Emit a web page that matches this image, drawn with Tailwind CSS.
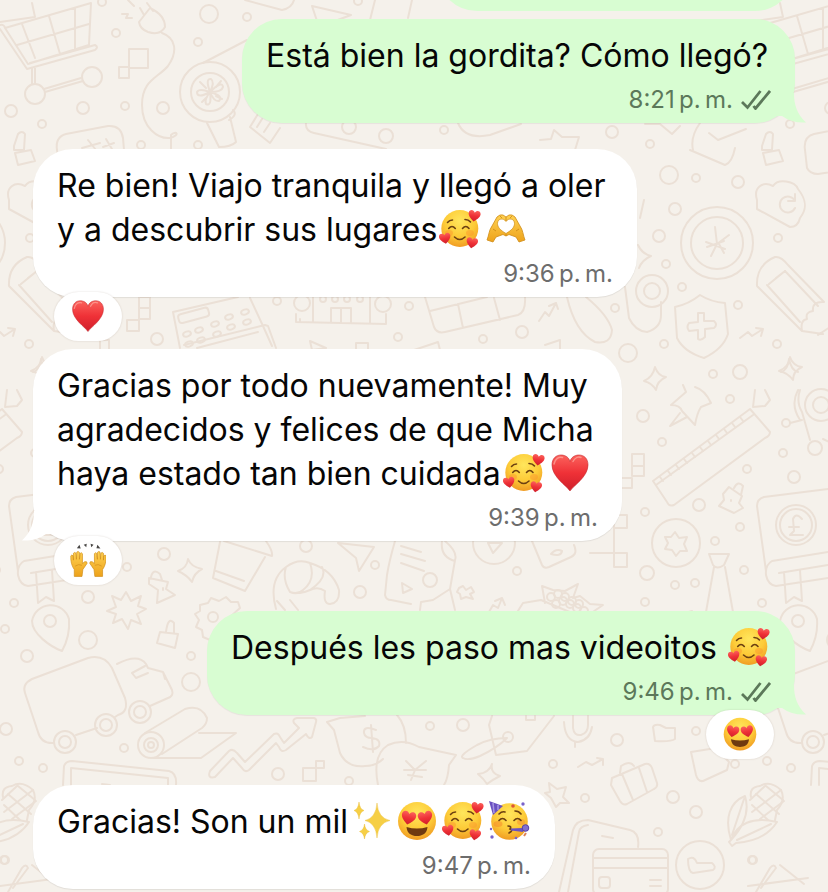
<!DOCTYPE html>
<html lang="es">
<head>
    <!-- Page setup -->
    <meta charset="UTF-8">
    <meta name="viewport" content="width=device-width, initial-scale=1.0">
    <title>Chat</title>
    <!-- Styling library -->
    <script src="https://cdn.jsdelivr.net/npm/@tailwindcss/browser@4"></script>
</head>
<body class="bg-[#f5f1eb] font-['Inter',sans-serif] text-[#060606]">
    <!-- Shared emoji and icon shapes -->
    <svg class="absolute size-0" aria-hidden="true">
        <defs>
            <radialGradient id="skin" cx=".5" cy=".3" r=".75">
                <stop offset="0" stop-color="#ffe65c"/>
                <stop offset=".55" stop-color="#fdcb38"/>
                <stop offset="1" stop-color="#ee9420"/>
            </radialGradient>
            <linearGradient id="red" x2="0" y2="1">
                <stop offset="0" stop-color="#fb625c"/>
                <stop offset=".5" stop-color="#ef3137"/>
                <stop offset="1" stop-color="#cf1f2b"/>
            </linearGradient>
            <linearGradient id="hand" x2="0" y2="1">
                <stop offset="0" stop-color="#ffd252"/>
                <stop offset="1" stop-color="#eda21b"/>
            </linearGradient>
            <path id="mini-heart" d="M0 5.5C-4.5 2.2-6 0-6-2.3C-6-6-1.6-6.8 0-3.4C1.6-6.8 6-6 6-2.3C6 0 4.5 2.2 0 5.5Z" fill="url(#red)"/>
            <symbol id="love-face" viewBox="0 0 42 42">
                <circle cx="20.8" cy="19.5" r="18.5" fill="url(#skin)"/>
                <ellipse cx="10" cy="24" rx="4" ry="3" fill="#f98b2b" opacity=".4"/>
                <ellipse cx="31" cy="24" rx="4" ry="3" fill="#f98b2b" opacity=".4"/>
                <g fill="none" stroke="#6b4011" stroke-width="1.6" stroke-linecap="round">
                    <path d="M8.5 13.5Q10.5 11 13.5 11M26 10.5Q29.500 10.500 31.500 13"/>
                    <path d="M9.7 19.5Q13 15.5 16.3 19.5M23.500 19.500Q26.800 15.500 30 19.500"/>
                    <path d="M15.5 28Q20.7 33 26 28"/>
                </g>
                <use href="#mini-heart" transform="translate(35.3 7) rotate(8)"/>
                <use href="#mini-heart" transform="translate(6 29.5) rotate(-10) scale(.95)"/>
                <use href="#mini-heart" transform="translate(33 34) rotate(10) scale(.95)"/>
            </symbol>
            <symbol id="heart-eyes" viewBox="0 0 42 42">
                <circle cx="21" cy="20" r="19" fill="url(#skin)"/>
                <use href="#mini-heart" transform="translate(12.5 17) rotate(12) scale(1.2)"/>
                <use href="#mini-heart" transform="translate(29.5 17) rotate(-12) scale(1.2)"/>
                <path d="M10.5 26Q21 29 31.5 26C31 32.5 26.5 35 21 35S11 32.5 10.5 26Z" fill="#6f3a10"/>
            </symbol>
            <symbol id="heart" viewBox="0 0 42 42">
                <path d="M21 38C18 33 3 24 3 12C3 5.500 7 2 12 2C16.500 2 20 4.500 21 8.500C22 4.500 25.500 2 30 2C35 2 39 5.500 39 12C39 24 24 33 21 38Z" fill="url(#red)" stroke="#c4282d" stroke-width=".6"/>
                <path d="M5 11C6 5.500 10 3.500 13.500 4.500M24 8.500C26 4.500 29.500 3.500 32 4.500" fill="none" stroke="#ffaaa0" stroke-width="1.5" stroke-linecap="round" opacity=".7"/>
            </symbol>
            <symbol id="heart-hands" viewBox="0 0 42 42">
                <path d="M2 31C4 26 4 21 7 17L12 8Q15 5 18 6L21 8L24 6Q27 5 30 8L35 17C38 21 38 26 40 31L34 33L31 28L24 25.500L21 27L18 25.500L11 28L8 33Z" fill="url(#hand)" stroke="#cf8c17" stroke-width=".8" stroke-linejoin="round"/>
                <path d="M21 24.5C15 21 12.5 18 12.5 14.5C12.5 9.500 18.500 8.500 21 12.500C23.500 8.500 29.500 9.500 29.500 14.500C29.500 18 27 21 21 24.500Z" fill="#fff" stroke="#cf8c17" stroke-width=".7"/>
                <path d="M21 8V12M21 25V27M8 20L11 22M34 20L31 22M15 7L17 9M27 7L25 9" fill="none" stroke="#c98512" stroke-width=".8"/>
            </symbol>
            <symbol id="raised-hands" viewBox="0 0 42 42">
                <g id="one-hand">
                    <path d="M5 39V31C2 27 .5 21 1 15Q2 13 3.5 15L4 20L4 12Q5.5 10 7 12L7.500 19L8 10.500Q9.500 9 11 11V19L12 12Q13.500 10.500 14.500 12.500L14.500 24L17 22Q20 21 20 23.500L15 31L14 39Z" fill="url(#hand)" stroke="#d08e1b" stroke-width=".8" stroke-linejoin="round"/>
                    <path d="M6 27Q10 24 14 26" fill="none" stroke="#d08e1b" stroke-width=".8"/>
                </g>
                <use href="#one-hand" transform="translate(43 0) scale(-1 1)"/>
                <path d="M8 6L11 2L12.5 6.5ZM16 2L19.5 .8L19 5ZM24 .8L27.5 2L24.8 5ZM32 2L35.5 6.5L30.8 6Z" fill="#484644"/>
            </symbol>
            <symbol id="sparkles" viewBox="0 0 42 42">
                <g fill="#f6cf45" stroke="#e9b92e" stroke-width=".4">
                    <path d="M27 2Q28 17 40 19.5Q28 22 27 37Q26 22 15 19.5Q26 17 27 2Z"/>
                    <path d="M9 1Q9.7 8 14 9.5Q9.7 11 9 18Q8.3 11 4 9.5Q8.3 8 9 1Z"/>
                    <path d="M14.5 23Q15.2 29 19.500 30.500Q15.200 32 14.500 38Q13.800 32 9.500 30.500Q13.800 29 14.500 23Z"/>
                </g>
            </symbol>
            <symbol id="party" viewBox="0 0 42 42">
                <circle cx="21.5" cy="20.5" r="18.3" fill="url(#skin)"/>
                <ellipse cx="10" cy="23" rx="4.5" ry="3" fill="#f57c2b" opacity=".45"/>
                <ellipse cx="33" cy="21" rx="4" ry="3" fill="#f57c2b" opacity=".4"/>
                <path d="M1 0L15 5L5 14Z" fill="#6a51c0"/>
                <path d="M5 2L6 12M10 4L10 9" stroke="#a797e4" stroke-width="1.5"/>
                <g fill="none" stroke="#6b4011" stroke-width="1.6" stroke-linecap="round">
                    <path d="M11 13Q14 10 17 11M27 10Q31 10 33 13"/>
                    <path d="M11 19.5Q14.5 15.5 18 19.5M26 19.5Q29.5 15.5 33 19.5"/>
                    <path d="M20 25Q24 25 22 28Q26 29 21 32"/>
                </g>
                <path d="M23 27.5L35 27V31L23 29.5Z" fill="#6a51c0"/>
                <circle cx="37.5" cy="27" r="3.3" fill="#8270ce" stroke="#573fa8"/>
                <g fill="#7962ca">
                    <circle cx="35" cy="3" r="1.7"/><circle cx="4" cy="36" r="1.7"/><circle cx="3" cy="28" r="1.2"/><circle cx="28" cy="37" r="1.3"/>
                </g>
                <circle cx="25" cy="5" r="1.8" fill="#dd5537"/>
                <path d="M36 35L38 32" stroke="#dd8055" stroke-width="2"/>
            </symbol>
            <symbol id="ticks" viewBox="0 0 30 20">
                <path d="M1 12L6.5 17.5L19.5 1M12.5 16L14.5 18.5L29 1" fill="none" stroke="currentColor" stroke-width="2.8"/>
            </symbol>
            <symbol id="tail" viewBox="0 0 30 30">
                <path d="M0 0H17C17 12 20 21 29 29.5C20 30 12 28 5 23L0 23Z" fill="currentColor"/>
            </symbol>
        </defs>
    </svg>

    <main class="relative isolate min-h-screen overflow-hidden px-[33px] pb-[3px]">
        <!-- Wallpaper doodles, one tile repeated sideways -->
        <svg class="absolute inset-0 -z-10 size-full" viewBox="0 0 828 892" preserveAspectRatio="xMinYMin slice" fill="none" stroke="#ebe0d6" stroke-width="2" stroke-linejoin="round" stroke-linecap="round" aria-hidden="true">
            <g id="tile">
                <!-- shopping cart -->
                <path d="M5 28L91 3L89 45L28 64ZM22 24L35 58M49 16L60 54M75 8V49M17 45L89 24M0 25Q4 24 5 28M0 29L27 69L95 50Q99 47 95 45L30 63M32 68V84M35 68V84M44 89L81 78M45 92L83 81M0 22L35 17L32 3"/>
                <circle cx="35" cy="94" r="10"/><circle cx="92" cy="77" r="10"/>
                <!-- squares, plug and cable -->
                <path d="M129 49H148V68H129ZM119 67H129V78H119ZM139 22L150 8Q165 15 165 27Q160 36 148 32Q140 29 139 22ZM144 15L140 8M153 11L147 3M122 14H128L126 18H132M128 0L134 6M162 33C176 38 178 52 168 66C158 78 142 80 142 105C142 128 158 139 170 138C181 135 176 130 171 135V149"/>
                <!-- desk fan -->
                <circle cx="210" cy="92" r="30"/><circle cx="210" cy="92" r="19"/>
                <path d="M210 92Q205 78 211 79Q215 82 210 92Q222 80 223 87Q222 92 210 92Q224 96 219 101Q214 102 210 92Q212 107 206 104Q204 100 210 92Q197 99 197 92Q199 88 210 92M200 82L206 88M221 81L216 87M222 99L216 96M202 102L207 97M203 63L247 40M207 123L219 147Q231 147 236 142L230 117M229 120Q238 115 233 110"/>
                <path d="M57 150Q55 137 66 134L108 126Q121 125 123 138L124 150M82 148L100 143M88 140L96 150M106 139L112 149M103 147L114 143"/>
                <path d="M258 114L250 127L270 143L280 128M262 119L257 127M270 123L264 132M306 123Q305 131 314 133L386 149M245 0L282 10Q292 8 294 0M312 6L351 15L319 27ZM375 0L370 20M412 0L408 18"/>
                <path d="M458 123Q465 140 490 135L521 124M540 140L551 139L554 130L562 137L579 137L575 150M645 124H660L672 134L680 126M700 123Q690 137 693 150M709 133L718 140L746 129M18 134Q22 130 25 134L24 150H14V146Z"/>
                <circle cx="11" cy="111" r="6"/><circle cx="83" cy="108" r="6"/><circle cx="125" cy="106" r="4"/><circle cx="102" cy="2" r="4"/><circle cx="116" cy="33" r="4"/><circle cx="209" cy="14" r="9"/><circle cx="247" cy="17" r="4"/><circle cx="198" cy="42" r="4"/><circle cx="163" cy="108" r="6"/><circle cx="42" cy="124" r="4"/><circle cx="141" cy="145" r="4"/><circle cx="198" cy="145" r="4"/><circle cx="349" cy="127" r="7"/><circle cx="386" cy="136" r="7"/><circle cx="444" cy="130" r="4"/><circle cx="612" cy="132" r="6"/><circle cx="650" cy="144" r="4"/><circle cx="358" cy="1" r="4"/>
                <!-- lock, calculator and cloud -->
                <path d="M15 153L31 150L35 161L18 165ZM57 150L59 168Q62 174 70 174L110 168L125 150M690 150L725 165Q732 163 735 148M9 200C5 187 15 181 25 186C30 178 47 181 50 189C58 199 60 208 52 218Q50 227 42 227L9 209ZM47 201A8 8 0 1 0 47 208M47 194V201H40"/>
                <!-- coin -->
                <circle cx="717" cy="243" r="36"/><circle cx="717" cy="243" r="26"/>
                <path d="M715 227L717 244L729 235M717 244L711 256M706 242L725 249M707 247L724 241M719 244L724 253"/>
                <!-- key ring -->
                <circle cx="652" cy="291" r="16"/><circle cx="652" cy="291" r="8"/>
                <path d="M625 287L629 318Q635 331 647 332Q661 328 661 315V302M644 200L640 218M638 245Q642 254 651 256Q642 260 639 268"/>
                <!-- shield -->
                <path d="M700 295Q711 302 725 303L728 334Q723 349 704 358Q684 352 677 338L675 307Q689 304 700 295ZM698 313H704V321L714 321Q718 325 714 328L705 329V337Q701 341 698 339V330L689 331Q686 327 689 323L698 322Z"/>
                <!-- pencil -->
                <path d="M9 286Q8 265 27 257Q33 256 40 265L76 302M9 286L54 331L75 334M21 284L37 271M37 271L70 306M19 285L52 322M37 271L28 278M76 302Q64 301 65 311Q57 312 59 319Q52 320 54 331M70 335L85 325M-8 338L0 332L4 336L15 329M15 329L8 328M15 329L13 336"/>
                <!-- calendar, trend arrow, bat -->
                <path d="M425 297L434 327Q437 334 445 332L518 315Q526 312 525 297M430 311L487 297M458 304L463 328M494 298L500 320M539 321L545 312L549 316L556 303M556 303L549 306M556 303L558 309M567 297Q575 332 595 342Q611 345 612 330Q608 315 586 297M414 350L438 342L440 350M545 345L560 340V350"/>
                <!-- receipt machine -->
                <path d="M173 312L238 297M173 312L180 348M250 298L263 326L272 346M184 345L265 325L268 326L276 348M197 348L258 332"/>
                <rect x="178" y="311" width="31" height="9" rx="3" transform="rotate(-15 193 315)"/>
                <g id="keys"><ellipse cx="187" cy="334" rx="4" ry="2.5" transform="rotate(-20 187 334)"/><ellipse cx="199" cy="330" rx="4" ry="2.5" transform="rotate(-20 199 330)"/><ellipse cx="215" cy="324" rx="4" ry="2.5" transform="rotate(-20 215 324)"/><ellipse cx="229" cy="317" rx="4" ry="2.5" transform="rotate(-20 229 317)"/><ellipse cx="245" cy="312" rx="4" ry="2.5" transform="rotate(-20 245 312)"/></g>
                <use href="#keys" transform="translate(2 10)"/>
                <path d="M139 297H150V319H139ZM139 308H150M127 320H139V331H127ZM93 340H109V349M100 340V349"/>
                <!-- building -->
                <path d="M296 322L386 324V314M296 322V314M313 297V322M370 297V323M331 322V308H351V322M341 308V322M300 319V322"/>
                <circle cx="302" cy="303" r="8"/><circle cx="383" cy="304" r="8"/><circle cx="323" cy="299" r="3"/><circle cx="335" cy="299" r="3"/><circle cx="347" cy="299" r="3"/><circle cx="360" cy="299" r="3"/>
                <path d="M310 341L326 348L312 350ZM356 349V343H368V349M33 372Q40 370 41 359Q43 370 50 372"/>
                <circle cx="669" cy="175" r="9"/><circle cx="696" cy="178" r="4"/><circle cx="738" cy="182" r="6"/><circle cx="675" cy="209" r="6"/><circle cx="659" cy="236" r="6"/><circle cx="666" cy="264" r="4"/><circle cx="682" cy="287" r="4"/><circle cx="30" cy="238" r="4"/><circle cx="738" cy="305" r="4"/><circle cx="615" cy="308" r="4"/><circle cx="664" cy="344" r="4"/><circle cx="628" cy="353" r="9"/><circle cx="29" cy="344" r="4"/><circle cx="522" cy="332" r="6"/><circle cx="483" cy="339" r="4"/><circle cx="713" cy="374" r="4"/><circle cx="740" cy="372" r="7"/><circle cx="157" cy="339" r="6"/><circle cx="277" cy="301" r="4"/><circle cx="398" cy="337" r="4"/><circle cx="409" cy="306" r="4"/>
                <path d="M655 367Q658 376 666 377Q657 381 656 390Q652 383 644 381Q653 377 655 367ZM42 357Q45 366 54 367Q45 371 45 380Q40 373 31 371Q41 367 42 357Z"/>
                <!-- push pin and ruler -->
                <path d="M671 405L686 392L683 385M671 405Q680 405 682 411L695 425Q697 413 701 407L711 403Q705 390 695 387M680 413L670 426L687 417M653 481L750 409L770 432Q770 436 765 438L674 505Q669 507 667 502ZM656 485L753 415"/>
                <path d="M660 477L663 481M668 471L671 475M676 465L679 469M684 459L687 463M692 453L695 457M700 447L703 451M708 441L711 445M716 435L719 439M724 429L727 433M732 423L735 427M740 417L743 421"/>
                <!-- robot -->
                <circle cx="73" cy="405" r="8"/><circle cx="73" cy="405" r="16"/><circle cx="67" cy="448" r="7"/><circle cx="38" cy="423" r="4"/><path d="M52 390Q48 402 54 412L62 440M75 439L88 445M42 423L54 420M17 390L22 400L17 406L5 407L7 390M50 390Q42 405 52 420"/>
                <path d="M632 454H644V476H632ZM632 466H644M620 478H632V488H620ZM614 515H627V528H614ZM590 553H627V567H614V528"/>
                <!-- medal and key tag -->
                <circle cx="676" cy="543" r="24"/><path d="M675 532L679 538L687 537L684 544L687 551L680 551L676 556L672 550L665 549L668 543L665 537L671 537ZM729 487L742 496L739 503L743 508L734 513L719 506L724 500L723 494ZM734 488Q738 480 743 486L741 495M731 500V501"/>
                <!-- tie -->
                <path d="M709 554H729L724 565Q717 570 713 565ZM714 567L706 612L721 620L733 612L725 567M665 619L692 611L695 620"/>
                <!-- pound book -->
                <path d="M18 571L9 506Q9 499 16 497L80 489M80 552L24 561Q17 565 18 575Q20 585 28 586L80 578M31 573L80 565M36 572L38 603L46 597L54 601L52 570"/>
                <circle cx="48" cy="525" r="20"/><circle cx="48" cy="525" r="16"/><path d="M54 519Q48 512 45 519L46 531L42 535H55M41 527H51"/>
                <!-- play button, cards, plane, cup, croissant -->
                <circle cx="494" cy="543" r="21"/><path d="M488 543L502 543L493 553ZM532 541L542 565Q544 569 549 567L571 557Q578 554 574 545M551 554Q556 548 562 551Q561 557 551 554ZM442 541Q440 557 455 561M445 541Q458 552 455 560L450 589M385 595L387 575Q389 562 395 541M385 595Q386 600 391 600L411 604M401 546L421 552M401 554L425 561M401 563L424 571M402 583L403 593L412 589ZM338 543L374 547L359 571L356 558Z"/>
                <path d="M224 541L272 556Q273 551 266 541M220 542L213 578L245 591L265 557M216 571L244 581M276 609Q268 580 286 567Q298 558 310 563Q333 570 339 590Q340 603 330 604Q323 604 325 591Q318 586 310 590Q306 592 300 593M286 567Q282 579 290 592Q298 595 303 590Q316 580 310 563M322 567Q328 578 310 590M277 601L285 610M290 600L298 610"/>
                <path d="M459 588L463 586L466 590L471 587L474 592L470 594L473 599L466 597L461 599L460 594L457 592ZM420 610L421 602L433 600L450 589L455 610M485 619L493 605L498 608L502 598M502 598L495 601M502 598L505 605"/>
                <!-- flower bouquet -->
                <path d="M516 614L523 603L541 600L584 618L603 605L590 604L580 596L573 598L578 584L565 591L553 590L542 586L545 603"/>
                <g id="berries"><circle cx="551" cy="597" r="4"/><circle cx="558" cy="594" r="4"/><circle cx="565" cy="597" r="4"/><circle cx="572" cy="601" r="4"/><circle cx="579" cy="604" r="4"/></g><use href="#berries" transform="translate(5 7)"/>
                <circle cx="643" cy="416" r="6"/><circle cx="730" cy="399" r="4"/><circle cx="662" cy="442" r="4"/><circle cx="35" cy="453" r="4"/><circle cx="747" cy="469" r="4"/><circle cx="46" cy="477" r="6"/><circle cx="699" cy="505" r="6"/><circle cx="645" cy="512" r="4"/><circle cx="740" cy="527" r="4"/><circle cx="715" cy="541" r="4"/><circle cx="647" cy="573" r="7"/><circle cx="675" cy="585" r="4"/><circle cx="695" cy="583" r="4"/><circle cx="744" cy="570" r="4"/><circle cx="645" cy="602" r="4"/><circle cx="14" cy="603" r="4"/><circle cx="517" cy="571" r="4"/><circle cx="430" cy="580" r="7"/><circle cx="164" cy="554" r="6"/><circle cx="127" cy="567" r="4"/><circle cx="88" cy="597" r="6"/><circle cx="306" cy="546" r="6"/><circle cx="375" cy="565" r="4"/><circle cx="360" cy="592" r="6"/><circle cx="5" cy="629" r="4"/><circle cx="88" cy="640" r="9"/><circle cx="27" cy="656" r="6"/><circle cx="191" cy="656" r="4"/><circle cx="191" cy="682" r="9"/><circle cx="6" cy="729" r="6"/>
                <!-- sparkle, burst, pin, lock, badge -->
                <path d="M188 559Q191 567 202 569Q194 573 192 582Q187 575 178 571Q187 568 188 559ZM126 592L131 601L141 596L138 606L146 609L137 614L141 624L131 620L128 629L122 619L113 623L116 614L107 611L116 607L112 596L121 600Z"/>
                <path d="M149 578L168 582L166 589L175 595L157 603L158 590L149 584ZM151 577Q153 568 160 574L162 580M163 588V590M62 651C51 647 32 634 32 621A19 19 0 0 1 69 619C70 632 67 642 62 651ZM160 632L178 634L175 648L157 643ZM166 632Q168 616 174 623V633"/>
                <circle cx="50" cy="621" r="6"/>
                <path d="M200 605L208 603L211 598L219 601L226 597L231 602L238 602L240 608L230 617L210 640L203 637L202 630L196 627L199 620L195 614L200 611Z"/><circle cx="213" cy="617" r="5"/>
                <!-- truck -->
                <path d="M25 693Q22 684 32 679L88 658Q104 654 112 668L125 698Q129 712 118 715L115 717M25 693L38 732Q41 744 54 743M76 735L97 728M117 664Q138 653 146 664L148 668L163 672L172 690Q174 696 168 698L150 706M132 673L145 666M132 673L136 678L148 673M163 672L165 679"/>
                <circle cx="65" cy="742" r="11"/><circle cx="65" cy="742" r="6"/><circle cx="106" cy="725" r="11"/><circle cx="106" cy="725" r="6"/><circle cx="140" cy="712" r="11"/><circle cx="140" cy="712" r="6"/>
                <!-- blueprint roll and growth arrow -->
                <circle cx="151" cy="745" r="13"/><circle cx="151" cy="745" r="7"/><circle cx="151" cy="745" r="3"/>
                <path d="M145 733L185 709Q201 704 207 718Q207 724 202 728L162 754M199 733H236L201 758H153M210 771L229 751Q233 748 237 753L245 762L274 734Q278 732 280 737L284 743L299 728L294 723Q292 719 297 718L314 718Q317 719 316 722L312 737Q309 740 306 734L286 750Q281 753 279 747L276 743L249 770Q245 773 242 768L233 758L215 777Q207 779 210 771Z"/>
                <path d="M303 768H316V781H303ZM316 761H324V768H316ZM63 785L64 766Q66 761 72 761L169 771Q177 773 176 785M71 785V768L168 778V785M102 784L110 785"/>
                <!-- money bags -->
                <path d="M327 722L340 718L365 716M327 722L334 730L340 753Q347 768 365 766Q376 766 383 759M397 715Q406 725 406 743M378 785Q372 755 388 745Q403 738 419 747L456 755L449 765Q448 779 444 785M376 730Q363 725 364 733Q365 738 372 738Q381 739 379 746Q374 752 363 747M371 725L373 752"/>
                <path d="M404 770H426M406 761L415 770L426 761M415 770L411 780M408 775L422 777"/>
                <!-- price tag, mic, folder -->
                <path d="M489 725L496 755L527 751L554 716M489 725L492 716M507 738Q490 738 477 745Q458 756 463 758Q468 761 480 756Q497 748 507 738Z"/><circle cx="508" cy="737" r="5"/>
                <path d="M573 716V728Q574 736 581 735Q588 733 588 725V716M564 722Q565 741 578 742Q590 740 592 727M575 742V747M526 716V720H535V716M653 727Q654 724 660 725L666 728L675 728V739Q671 742 655 741ZM691 752L716 748L729 762L727 770L703 781Q698 782 696 775Z"/>
                <!-- suitcase, star, sparkle -->
                <path d="M612 778L645 764Q650 763 652 768L657 783Q658 787 654 789L627 804Q623 806 620 801L611 785ZM622 774L633 800M639 768L647 792M620 773L621 766Q630 760 634 766M549 783L557 789L566 787L563 797L569 803L560 803L556 807L551 798L545 793L550 792ZM492 764Q490 773 500 776Q492 780 487 784Q484 779 478 774Q489 773 492 764ZM578 767L586 762L592 765L603 759M603 759L597 758M603 759L603 765"/>
                <circle cx="430" cy="726" r="4"/><circle cx="463" cy="725" r="6"/><circle cx="617" cy="740" r="6"/><circle cx="696" cy="731" r="4"/><circle cx="553" cy="764" r="4"/><circle cx="585" cy="798" r="4"/><circle cx="673" cy="797" r="6"/><circle cx="696" cy="812" r="6"/><circle cx="658" cy="832" r="4"/><circle cx="753" cy="860" r="4"/><circle cx="735" cy="764" r="4"/><circle cx="19" cy="761" r="4"/><circle cx="43" cy="768" r="4"/><circle cx="124" cy="748" r="4"/><circle cx="278" cy="774" r="6"/><circle cx="349" cy="781" r="4"/><circle cx="4" cy="860" r="4"/>
                <!-- phone, credit card, check -->
                <path d="M559 892L573 830Q576 820 588 820L630 830Q640 833 638 847M568 892L579 832Q580 826 588 825M602 836L613 838"/>
                <rect x="593" y="849" width="75" height="46" rx="6"/><path d="M593 858H668M593 868H668M650 880H661M650 886H661"/><rect x="599" y="877" width="11" height="11" rx="3"/>
                <circle cx="700" cy="865" r="24"/><path d="M688 859Q694 855 697 863L712 863Q717 867 713 870L693 873Q688 872 688 859Z"/>
                <!-- corn husk -->
                <path d="M731 840C724 818 730 802 745 796C750 812 744 826 731 840ZM731 840C737 824 752 816 777 822C768 836 752 842 736 843L732 846L729 842ZM744 799L732 835M771 824L737 840M751 797Q749 787 760 786Q770 780 781 790Q786 800 777 810L775 820"/>
                <path d="M752 805L768 820M756 794L779 814M766 786L783 800M752 812L781 790M760 819L784 801M750 800L765 786"/>
                <path d="M8 892L22 868Q26 863 28 868L13 888M0 886L60 878M32 865L56 884"/>
            </g>
            <use href="#tile" x="748"/>
            <use href="#tile" x="-748"/>
        </svg>

        <!-- Conversation -->
        <div class="flex flex-col">
            <!-- Previous message, scrolled off the top -->
            <div class="flex h-[11px] items-end justify-end overflow-hidden">
                <div class="h-[104px] w-[358px] shrink-0 rounded-[40px] bg-[#d8fdd2]"></div>
            </div>

            <!-- Sent message -->
            <article class="relative mt-2 w-[553px] max-w-full self-end rounded-[40px] bg-[#d8fdd2] pt-[15px] pr-5 pb-[9px] pl-6 shadow-[0_1px_1px_rgba(0,0,0,0.06)]">
                <p class="text-[32px] leading-[44px]">Está bien la gordita? Cómo llegó?</p>
                <div class="mt-2 flex items-center justify-end gap-2 pr-1 text-[#5c785a]">
                    <time class="text-2xl leading-7">8:21&#8239;p.&#8239;m.</time>
                    <svg class="h-5 w-[30px]" role="img" aria-label="Entregado"><use href="#ticks"/></svg>
                </div>
                <svg class="absolute -right-3 bottom-0 size-[30px] text-[#d8fdd2]" aria-hidden="true"><use href="#tail"/></svg>
            </article>

            <!-- Received message with reaction -->
            <article class="mt-[26px] w-[604px] max-w-full rounded-[40px] bg-white pt-[15px] pr-5 pb-[9px] pl-6 shadow-[0_1px_1px_rgba(0,0,0,0.08)]">
                <p class="text-[32px] leading-[44px]">Re bien! Viajo tranquila y llegó a oler y a descubrir sus lugares<svg class="mx-0.5 inline-block size-[42px] align-[-10px]" role="img" aria-label="Cara con corazones"><use href="#love-face"/></svg><svg class="mx-0.5 inline-block size-[42px] align-[-10px]" role="img" aria-label="Manos en corazón"><use href="#heart-hands"/></svg></p>
                <div class="mt-2 flex justify-end pr-1 text-[#6d6d6d]">
                    <time class="text-2xl leading-7">9:36&#8239;p.&#8239;m.</time>
                </div>
            </article>
            <button type="button" aria-label="Reacción: corazón" class="relative -mt-[5px] ml-[21px] flex h-[49px] w-[68px] items-center justify-center rounded-full bg-white shadow-[0_0_2px_rgba(90,60,40,0.2)]">
                <svg class="size-9" aria-hidden="true"><use href="#heart"/></svg>
            </button>

            <!-- Received message with tail and reaction -->
            <article class="relative mt-2 w-[589px] max-w-full rounded-[40px] bg-white pt-[15px] pr-5 pb-[9px] pl-6 shadow-[0_1px_1px_rgba(0,0,0,0.08)]">
                <p class="text-[32px] leading-[44px]">Gracias por todo nuevamente! Muy agradecidos y felices de que Micha haya estado tan bien cuidada<svg class="mx-0.5 inline-block size-[42px] align-[-10px]" role="img" aria-label="Cara con corazones"><use href="#love-face"/></svg><svg class="mx-0.5 inline-block size-[42px] align-[-10px]" role="img" aria-label="Corazón"><use href="#heart"/></svg></p>
                <div class="mt-2 flex justify-end pr-1 text-[#6d6d6d]">
                    <time class="text-2xl leading-7">9:39&#8239;p.&#8239;m.</time>
                </div>
                <svg class="absolute bottom-0 -left-3 size-[30px] -scale-x-100 text-white" aria-hidden="true"><use href="#tail"/></svg>
            </article>
            <button type="button" aria-label="Reacción: manos levantadas" class="relative -mt-[5px] ml-[21px] flex h-[49px] w-[68px] items-center justify-center rounded-full bg-white shadow-[0_0_2px_rgba(90,60,40,0.2)]">
                <svg class="size-9" aria-hidden="true"><use href="#raised-hands"/></svg>
            </button>

            <!-- Sent message with reaction -->
            <article class="relative mt-[26px] w-[588px] max-w-full self-end rounded-[40px] bg-[#d8fdd2] pt-[15px] pr-5 pb-[9px] pl-6 shadow-[0_1px_1px_rgba(0,0,0,0.06)]">
                <p class="text-[32px] leading-[44px]">Después les paso mas videoitos <svg class="mx-0.5 inline-block size-[42px] align-[-10px]" role="img" aria-label="Cara con corazones"><use href="#love-face"/></svg></p>
                <div class="mt-2 flex items-center justify-end gap-2 pr-1 text-[#5c785a]">
                    <time class="text-2xl leading-7">9:46&#8239;p.&#8239;m.</time>
                    <svg class="h-5 w-[30px]" role="img" aria-label="Entregado"><use href="#ticks"/></svg>
                </div>
                <svg class="absolute -right-3 bottom-0 size-[30px] text-[#d8fdd2]" aria-hidden="true"><use href="#tail"/></svg>
            </article>
            <button type="button" aria-label="Reacción: ojos de corazón" class="relative -mt-[5px] mr-[21px] flex h-[49px] w-[68px] items-center justify-center self-end rounded-full bg-white shadow-[0_0_2px_rgba(90,60,40,0.2)]">
                <svg class="size-9" aria-hidden="true"><use href="#heart-eyes"/></svg>
            </button>

            <!-- Received message -->
            <article class="mt-[26px] w-[522px] max-w-full rounded-[40px] bg-white pt-[15px] pr-5 pb-[9px] pl-6 shadow-[0_1px_1px_rgba(0,0,0,0.08)]">
                <p class="text-[32px] leading-[44px]">Gracias! Son un mil<svg class="mx-0.5 inline-block size-[42px] align-[-10px]" role="img" aria-label="Brillos"><use href="#sparkles"/></svg><svg class="mx-0.5 inline-block size-[42px] align-[-10px]" role="img" aria-label="Ojos de corazón"><use href="#heart-eyes"/></svg><svg class="mx-0.5 inline-block size-[42px] align-[-10px]" role="img" aria-label="Cara con corazones"><use href="#love-face"/></svg><svg class="mx-0.5 inline-block size-[42px] align-[-10px]" role="img" aria-label="Cara de fiesta"><use href="#party"/></svg></p>
                <div class="mt-2 flex justify-end pr-1 text-[#6d6d6d]">
                    <time class="text-2xl leading-7">9:47&#8239;p.&#8239;m.</time>
                </div>
            </article>
        </div>
    </main>
</body>
</html>
